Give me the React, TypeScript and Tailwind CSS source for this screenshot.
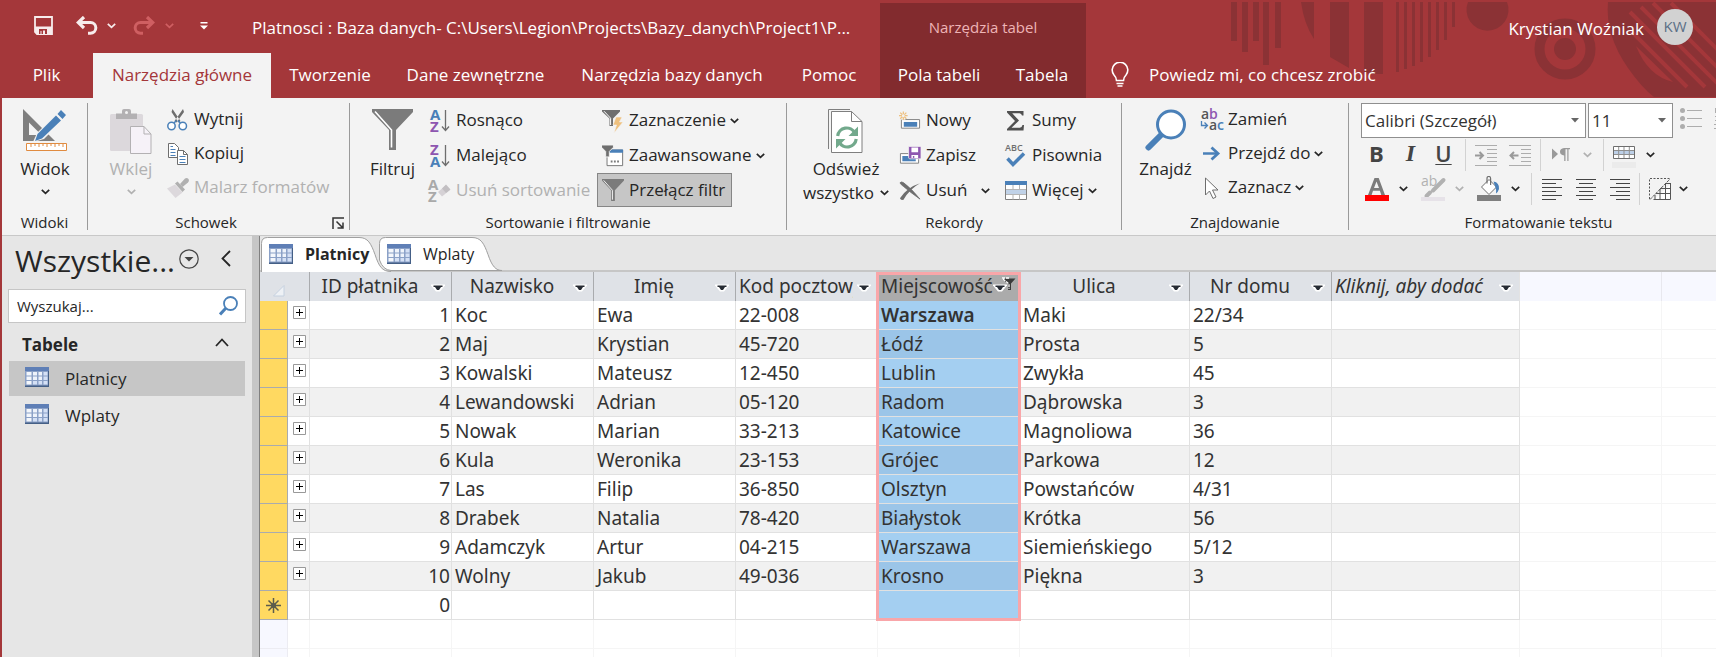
import React from "react";
import clsx from "clsx";

const uiFont = "font-['Open_Sans','Liberation_Sans',sans-serif]";
const gridFont = "font-['Noto_Sans','Liberation_Sans',sans-serif]";

/* ---------- small shared drawings ---------- */

function Chevron({ className = "text-[#262626]" }: { className?: string }) {
  return (
    <svg width="9" height="6" viewBox="0 0 9 6" className={clsx("shrink-0", className)} aria-hidden="true">
      <path d="M.8.8 4.5 4.4 8.2.8" fill="none" stroke="currentColor" strokeWidth="1.7" />
    </svg>
  );
}

function FunnelShape({ size }: { size: number }) {
  return (
    <svg width={size} height={size} viewBox="0 0 41 41" className="shrink-0" aria-hidden="true">
      <path d="M0 0h41v3L24 21v20h-7V21L0 3z" fill="#7b7b7b" />
      <path d="M3 2.5 19.5 21v17.500" fill="none" stroke="#fff" strokeWidth="1.6" />
    </svg>
  );
}

const SaveIcon = () => (
  <svg width="19" height="19" viewBox="0 0 19 19" aria-hidden="true">
    <path d="M1 1h17v17H3l-2-2z" fill="none" stroke="#f7ecec" strokeWidth="1.800" />
    <path d="M1 10.500h17V18H3l-2-2z" fill="#f7ecec" />
    <path d="M5 13h8v5h-2v-3.500H9V18H7.500v-3H6.500v3H5z" fill="#a4373a" />
  </svg>
);

const UndoIcon = ({ className }: { className?: string }) => (
  <svg width="22" height="20" viewBox="0 0 22 20" className={className} aria-hidden="true">
    <path d="M2 6.500h12.500a5.300 5.300 0 0 1 0 10.700H12" fill="none" stroke="currentColor" strokeWidth="3" />
    <path d="M8 1 2.200 6.500 8 12" fill="none" stroke="currentColor" strokeWidth="3.200" />
  </svg>
);

const ViewIcon = () => (
  <svg width="44" height="44" viewBox="0 0 44 44" aria-hidden="true">
    <path fillRule="evenodd" fill="#7f7f7f" d="M0 0 32 32H0zM6 13.500V26h12.500z" />
    <path d="m10 33 4-9L34.500 3.500l7 6L21 30z" fill="#f3f3f3" />
    <path d="m12 32 2.500-7L33 6.500l5 5L19 29.500zM34.500 5 38 1l5 5-3.500 4z" fill="#4a80b8" />
    <path d="M3.500 34.500h40v7h-40z" fill="#fff" stroke="#e08b40" />
    <path d="M8 35v3m4-3v2m4-2v3m4-3v2m4-2v3m4-3v2m4-2v3m4-3v2m4-2v3" stroke="#e08b40" />
  </svg>
);

const PasteIcon = () => (
  <svg width="42" height="46" viewBox="0 0 42 46" aria-hidden="true">
    <rect y="5" width="33" height="37" rx="1.500" fill="#dcd8dc" />
    <path d="M6 4.500h6V2q0-2 2-2h5q2 0 2 2v2.500h6V10H6z" fill="#b3b1b3" />
    <circle cx="16.500" cy="3.500" r="1.500" fill="#f3f3f3" />
    <path d="M20.500 17.500H34l7 7.500v19.500H20.500z" fill="#f6f2f8" stroke="#b3b1b3" />
    <path d="M34 17.500V25h7" fill="none" stroke="#b3b1b3" />
  </svg>
);

const CutIcon = () => (
  <svg width="22" height="22" viewBox="0 0 22 22" aria-hidden="true">
    <path d="M5.500 0 13.500 12l-2 1.500L4.500 3zM16 0 7.500 12l2 1.500L17 3z" fill="#6e6e6e" />
    <circle cx="4.500" cy="17" r="3.700" fill="#fff" stroke="#4a80b8" strokeWidth="1.500" />
    <circle cx="15.800" cy="17" r="3.700" fill="#fff" stroke="#4a80b8" strokeWidth="1.500" />
    <path d="m7 14 2.500-2.500M13.300 14 11 11.500" stroke="#4a80b8" strokeWidth="1.500" />
  </svg>
);

const CopyIcon = () => (
  <svg width="22" height="23" viewBox="0 0 22 23" aria-hidden="true">
    <path d="M1.500.5h6l4 4v10h-10z" fill="#fff" stroke="#6e6e6e" />
    <path d="M3.500 6.500h5m-5 3h5m-5 3h5m-5-9H6" stroke="#4a80b8" />
    <path d="M10.500 7.500h6l4 4v10h-10z" fill="#fff" stroke="#6e6e6e" />
    <path d="M16.500 7.500v4h4" fill="none" stroke="#6e6e6e" />
    <path d="M12.500 13.500h6m-6 3h6m-6 3h6" stroke="#4a80b8" />
  </svg>
);

const BrushIcon = () => (
  <svg width="22" height="21" viewBox="0 0 22 21" aria-hidden="true">
    <path d="m0 10.500 8-4 7.500 8L8.500 20z" fill="#dcd8dc" />
    <path d="m8 5.500 2.500-2 7.500 8-2.500 2.500z" fill="#b0b0b0" />
    <path d="m13 6 5-5.500q2-1 3.500.5 1 2-.5 3.500L15.500 9z" fill="#b0b0b0" />
  </svg>
);

const LauncherIcon = () => (
  <svg width="12" height="12" viewBox="0 0 12 12" aria-hidden="true">
    <path d="M1 12V1h11M4.500 4.500l6 6M11 5.500V11H5.500" fill="none" stroke="#333" strokeWidth="1.500" />
  </svg>
);

function SortIcon({ top, bottom, faded }: { top: "A" | "Z"; bottom: "A" | "Z"; faded?: boolean }) {
  const tone = (c: "A" | "Z") => (faded ? "#a9a9a9" : c === "A" ? "#4a80b8" : "#8e56b0");
  return (
    <svg width="24" height="24" viewBox="0 0 24 24" aria-hidden="true" className="shrink-0 overflow-visible font-['Open_Sans',sans-serif] text-[15px] font-bold">
      <text x={faded ? 0 : 2} y="11" fill={tone(top)}>{top}</text>
      <text x={faded ? 0 : 2} y="23" fill={tone(bottom)}>{bottom}</text>
      {faded ? (
        <g>
          <path d="M17.500 6.500 22 11l-8 6.500-4-4.500z" fill="#d5d1d5" />
          <path d="m14 9.500 4 4.500 4.500-3.500-4.500-5z" fill="#c2bfc2" />
        </g>
      ) : (
        <path d="M17.500 1v20M14 17.500l3.500 4 3.500-4" fill="none" stroke="#6e6e6e" strokeWidth="1.300" />
      )}
    </svg>
  );
}

const FilterBoltIcon = () => (
  <svg width="22" height="24" viewBox="0 0 22 24" aria-hidden="true">
    <path d="M0 1h18v1.500L11 9.500V17H7.500V9.500L0 2.500z" fill="#6e6e6e" />
    <path d="M2 2.200 8.600 9.200V16" fill="none" stroke="#fff" />
    <path d="m14 8h6l-2.500 5H21l-9 11 2.500-8H11z" fill="#eec07e" stroke="#f3f3f3" strokeWidth=".6" />
  </svg>
);

const FilterAdvancedIcon = () => (
  <svg width="24" height="24" viewBox="0 0 24 24" aria-hidden="true">
    <path d="M5.500 5.500h17v17h-17z" fill="#fff" stroke="#6e6e6e" />
    <path d="M9 5h14v3.500H7z" fill="#4a80b8" />
    <path d="M-.5 0h13v2.500L8 7v6H4V7L-.5 2.500z" fill="#6e6e6e" stroke="#f3f3f3" />
    <path d="M9.500 17h2v2h-2zm3.500 0h2v2h-2zm3.500 0h2v2h-2z" fill="#7b7b7b" />
  </svg>
);

const RefreshIcon = () => (
  <svg width="36" height="44" viewBox="0 0 36 44" aria-hidden="true">
    <path d="M.5 40V.5H22" fill="none" stroke="#7f7f7f" />
    <path d="M3.500 2.500h20l10.500 10v31h-30.500z" fill="#fff" stroke="#7f7f7f" />
    <path d="M23.500 2.500v10H34" fill="none" stroke="#7f7f7f" />
    <path d="M9.700 27a9 9 0 0 1 17-3M28.200 30a9 9 0 0 1-17 3" fill="none" stroke="#72a98c" strokeWidth="3.200" />
    <path d="M30 17.500V27h-9.500zM8 39.500V30h9.500z" fill="#72a98c" />
  </svg>
);

const NewRecordIcon = () => (
  <svg width="23" height="20" viewBox="0 0 23 20" aria-hidden="true">
    <path d="M2.500 8.500h19v9h-19z" fill="#fff" stroke="#7f7f7f" />
    <path d="M5 11h14v5H5z" fill="#4a80b8" />
    <circle cx="4.500" cy="4.500" r="4.500" fill="#f3f3f3" />
    <path d="M4.500 0v9M0 4.500h9M1.300 1.300l6.400 6.400m0-6.400L1.300 7.700" stroke="#eec07e" strokeWidth="1.300" />
    <circle cx="4.500" cy="4.500" r="1.500" fill="#f3f3f3" />
  </svg>
);

const SaveRecordIcon = () => (
  <svg width="23" height="20" viewBox="0 0 23 20" aria-hidden="true">
    <path d="M1.500 7.500h19v10h-19z" fill="#fff" stroke="#7f7f7f" />
    <path d="M3.500 10h14v5.500h-14z" fill="#4a80b8" />
    <path d="M10 0h13v13H11l-1-1z" fill="#8e56b0" stroke="#f3f3f3" strokeWidth=".8" />
    <path d="M13 1h7v5h-7zm0 8h7v3h-7z" fill="#fff" />
    <path d="M14.500 10h1.500v2h-1.500z" fill="#8e56b0" />
  </svg>
);

const DeleteIcon = () => (
  <svg width="23" height="20" viewBox="0 0 23 20" aria-hidden="true">
    <path d="M1 1.500Q2.500-.5 5 1.500q8 6 17 17-10-7-17-13Q2 3.500 1 1.500z" fill="#6e6e6e" stroke="#6e6e6e" strokeWidth=".8" />
    <path d="M22 2Q11 8 4.500 19.500q-3 0-3.500-2Q9 6 22 2z" fill="#6e6e6e" />
  </svg>
);

const SigmaIcon = () => (
  <svg width="22" height="20" viewBox="0 0 22 20" aria-hidden="true">
    <path d="M2 0h16.500v4.500h-1.500Q16.500 2.500 14.500 2.200H7.200L14 9.500l-7.500 7.300h8.300q2.200-.3 2.700-2.800H19l-.5 5.500H2v-1.500L10 10 2 1.500z" fill="#505050" />
  </svg>
);

const SpellIcon = () => (
  <svg width="22" height="24" viewBox="0 0 22 24" aria-hidden="true" className="overflow-visible font-['Open_Sans',sans-serif] text-[9px] font-semibold">
    <text x="0" y="7" fill="#6e6e6e">ABC</text>
    <path d="m2.500 14.500 5.500 6 11-11" fill="none" stroke="#4a80b8" strokeWidth="3.500" />
  </svg>
);

const MoreIcon = () => (
  <svg width="22" height="20" viewBox="0 0 22 20" aria-hidden="true">
    <path d="M.5.500h21v18H.5z" fill="#fff" stroke="#7f7f7f" />
    <path d="M0 0h22v4H0z" fill="#4a80b8" />
    <path d="M1 8.500h20v5H1z" fill="#c0d2e8" />
    <path d="M1 8.500h20M1 13.500h20M8 4v4.500M14.500 4v4.500M8 13.500v5M14.500 13.500v5" stroke="#b5b5b5" />
  </svg>
);

const FindIcon = () => (
  <svg width="42" height="42" viewBox="0 0 42 42" aria-hidden="true">
    <path d="M3.500 38.500 17 25" stroke="#4a80b8" strokeWidth="6" strokeLinecap="round" />
    <circle cx="26" cy="15.500" r="13.500" fill="#fff" stroke="#4a80b8" strokeWidth="3" />
  </svg>
);

const ReplaceIcon = () => (
  <svg width="24" height="24" viewBox="0 0 24 24" aria-hidden="true" className="shrink-0 overflow-visible font-['Open_Sans',sans-serif] text-[14px] font-semibold">
    <text x="1" y="11" fill="#555">a</text>
    <text x="9" y="11" fill="#8e56b0">b</text>
    <text x="9" y="22" fill="#555">a</text>
    <text x="17" y="22" fill="#4a80b8">c</text>
    <path d="M1.500 13v4.500H7M4.500 14.500l3 3-3 3" fill="none" stroke="#4a80b8" strokeWidth="1.300" />
  </svg>
);

const GotoIcon = () => (
  <svg width="18" height="16" viewBox="0 0 18 16" aria-hidden="true">
    <path d="M0 7.500h14" stroke="#4a80b8" strokeWidth="2.500" />
    <path d="M8.500 1.500 15 7.500l-6.500 6" fill="none" stroke="#4a80b8" strokeWidth="2.800" />
  </svg>
);

const PointerIcon = () => (
  <svg width="16" height="23" viewBox="0 0 16 23" aria-hidden="true">
    <path d="M1.500 1v17l4-4 3.500 7.500 3-1.500-3.500-7h5.500z" fill="#fff" stroke="#6e6e6e" />
  </svg>
);

const SheetIcon = () => (
  <svg width="24" height="20" viewBox="0 0 24 20" className="shrink-0" aria-hidden="true">
    <path d="M0 0h24v20H0z" fill="#8ba1c7" />
    <path d="M0 0h24v4H0z" fill="#5f7fb6" />
    <path d="M1.500 5h5v3.500h-5zm0 4.500h5V13h-5zm0 4.500h5v3.500h-5z" fill="#f4f7fc" />
    <path d="M8 5h4v3.500H8zm5.500 0h3.500v3.500h-3.500zM8 9.500h4V13H8zm5.500 0h3.500V13h-3.500z" fill="#eef3fb" />
    <path d="M18.500 5h4v3.500h-4zm0 4.500h4V13h-4zM8 14h4v3.500H8zm5.500 0h3.500v3.500h-3.500zm5 0h4v3.500h-4z" fill="#d4e0f5" />
    <path d="M0 18.500h24V20H0zM23 4h1v16h-1z" fill="#445f86" />
  </svg>
);

/* ---------- title bar ---------- */

const Backdrop = () => (
  <svg width="488" height="98" viewBox="0 0 488 98" className="absolute right-0 top-0" aria-hidden="true">
    <g fill="#8b3235">
      <path d="M3 2h6v39H3zM14 2h6v50h-6zM25 2h6v39h-6zM35 2h6v63h-6zM47 2h6v46h-6z" />
      <path d="M73 2h13v37Q76 24 73 2zM102 2h19v66l-19-11zM136 2h19v72q-10 0-19-1z" />
      <path d="M168 2h3v70h-3zM176 2h3v67h-3zM184 2h3v64h-3zM192 2h3v60h-3zM200 2h3v55h-3zM208 2h3v48h-3zM216 2h3v38h-3zM224 2h3v25h-3z" />
      <path d="M240 2h39a21 21 0 1 1-39 0z" />
      <circle cx="337" cy="49" r="11" />
      <path d="M380 2Q377 35 400 68q14 20 26 29h62V2z" />
    </g>
    <circle cx="337" cy="49" r="25.500" fill="none" stroke="#8b3235" strokeWidth="10" />
    <g fill="none" stroke="#a4373a" strokeWidth="4">
      <path d="m402 12 75 75M413 7l78 78M425 3l70 70M403 31l56 56M443 3l56 56" />
    </g>
    <path d="M408 46q12 30 37 36z" fill="#a4373a" />
  </svg>
);

function TitleBar() {
  return (
    <div className="flex h-[53px] text-white">
      <div className="flex w-[878px] shrink-0 items-center pb-0.5">
        <button aria-label="Zapisz" className="ml-8"><SaveIcon /></button>
        <button aria-label="Cofnij" className="ml-[23px] text-[#f7ecec]"><UndoIcon /></button>
        <button aria-label="Lista cofania" className="ml-[9px]"><Chevron className="text-[#f7ecec]" /></button>
        <button aria-label="Ponów" className="ml-[17px] text-[#cf5f62]"><UndoIcon className="-scale-x-100" /></button>
        <button aria-label="Lista ponawiania" className="ml-[10px]"><Chevron className="text-[#cf5f62]" /></button>
        <button aria-label="Dostosuj pasek" className="ml-[26px]">
          <svg width="8" height="8" viewBox="0 0 8 8" aria-hidden="true"><path d="M.5 0h7v1.500h-7zM0 3.500h8L4 7.500z" fill="#fff" /></svg>
        </button>
        <h1 className="ml-11 pt-1 text-[17px] leading-6 whitespace-nowrap">
          Platnosci : Baza danych- C:\Users\Legion\Projects\Bazy_danych\Project1\P...
        </h1>
      </div>
      <div className="mt-[3px] flex w-[206px] shrink-0 items-center justify-center bg-[#822b2e] pb-0.5 text-[15px] text-[#eeb4b6]">
        Narzędzia tabel
      </div>
      <div className="flex flex-1 items-center justify-end gap-[13px] pr-[23px]">
        <span className="pt-1 text-[17px] leading-6">Krystian Woźniak</span>
        <span className="grid size-9 place-items-center rounded-full bg-[#d2d2d2] text-[15px] text-[#5b6f86]">KW</span>
      </div>
    </div>
  );
}

const tabs = [
  { name: "Plik", size: "w-[91px] pr-0.5" },
  { name: "Narzędzia główne", size: "w-[178px]", active: true },
  { name: "Tworzenie", size: "w-[118px]" },
  { name: "Dane zewnętrzne", size: "w-[173px]" },
  { name: "Narzędzia bazy danych", size: "w-[220px]" },
  { name: "Pomoc", size: "w-[98px] pr-1" },
  { name: "Pola tabeli", size: "w-[118px]", context: true },
  { name: "Tabela", size: "w-[88px]", context: true },
];

function TabStrip() {
  return (
    <nav className="flex h-[45px] text-[17px] text-white">
      {tabs.map((t) => (
        <button
          key={t.name}
          className={clsx(
            "shrink-0 pb-0.5 whitespace-nowrap",
            t.size,
            t.active && "bg-[#f3f3f3] text-[#a4373a]",
            t.context && "bg-[#822b2e]",
          )}
        >
          {t.name}
        </button>
      ))}
      <button className="ml-[25px] flex items-center gap-5 pb-0.5 whitespace-nowrap">
        <svg width="18" height="25" viewBox="0 0 18 25" aria-hidden="true">
          <path d="M5.500 18.500q0-3-2.500-5.500A7.800 7.800 0 1 1 15 13q-2.500 2.500-2.500 5.500zM5.500 21.500h7M6.500 24h5" fill="none" stroke="#fff" strokeWidth="1.600" />
        </svg>
        Powiedz mi, co chcesz zrobić
      </button>
    </nav>
  );
}

/* ---------- ribbon ---------- */

function Group({ title, size, children, launcher }: { title: string; size: string; children: React.ReactNode; launcher?: boolean }) {
  return (
    <section className={clsx("flex flex-col", size)}>
      <div className="flex h-[113px] pt-[5px]">{children}</div>
      <div className="flex h-6 items-center pb-0.5 text-[15px]">
        <span className="flex-1 text-center">{title}</span>
        {launcher && (
          <button aria-label="Okno schowka" className="ml-2 mr-[5px] flex pt-0.5"><LauncherIcon /></button>
        )}
      </div>
    </section>
  );
}

const Divider = () => <div className="my-[5px] w-px shrink-0 bg-[#9a9a9a]" />;

function BigButton({ icon, lines, size, muted, menu }: { icon: React.ReactNode; lines: string[]; size: string; muted?: boolean; menu?: boolean }) {
  const last = lines.length - 1;
  return (
    <button className={clsx("flex shrink-0 flex-col items-center pt-[6px] leading-6", size, muted && "text-[#b1b1b1]")}>
      <span className="mb-[3px] flex h-[45px]">{icon}</span>
      {lines.map((l, i) => (
        <span key={l} className="flex items-center gap-[6px] whitespace-nowrap">
          {l}
          {i === last && last > 0 && menu && <Chevron />}
        </span>
      ))}
      {last === 0 && menu && <span className="mt-2 flex"><Chevron className={muted ? "text-[#b1b1b1]" : "text-[#262626]"} /></span>}
    </button>
  );
}

function Cmd({ icon, label, menu, muted, tall, wide }: { icon: React.ReactNode; label: string; menu?: boolean; muted?: boolean; tall?: boolean; wide?: boolean }) {
  return (
    <button className={clsx("flex items-center whitespace-nowrap", tall ? "h-[35px]" : "h-[34px]", muted && "text-[#b1b1b1]")}>
      <span className="mr-[5px] flex w-[22px] shrink-0 justify-center">{icon}</span>
      <span className="pb-0.5">{label}</span>
      {menu && <span className={clsx("flex", wide ? "ml-[14px]" : "ml-1")}><Chevron /></span>}
    </button>
  );
}

const Tick = () => <span className="h-8 w-px shrink-0 bg-[#d2d2d2]" />;

function DropTriangle() {
  return (
    <svg width="8" height="5" viewBox="0 0 8 5" aria-hidden="true" className="pointer-events-none absolute right-[7px] top-[15px]">
      <path d="M0 0h8L4 4.500z" fill="#666" />
    </svg>
  );
}

function Indent({ out }: { out?: boolean }) {
  return (
    <svg width="22" height="21" viewBox="0 0 22 21" aria-hidden="true">
      <path d="M0 .5h22M12 4.500h10M12 8.500h10M12 12.500h10M12 16.500h10M0 20.500h22" stroke="#adadad" />
      <path d={out ? "M9.500 10.500H2M5 7l-3.500 3.500L5 14" : "M0 10.500h7.500M4.500 7l3.500 3.500L4.500 14"} fill="none" stroke="#9a9a9a" strokeWidth="2" />
    </svg>
  );
}

function AlignIcon({ kind }: { kind: "left" | "center" | "right" }) {
  const short = kind === "left" ? 0 : kind === "center" ? 3 : 6;
  return (
    <svg width="20" height="21" viewBox="0 0 20 21" aria-hidden="true">
      {[0, 1, 2, 3, 4, 5].map((i) => (
        <rect key={i} x={i % 2 ? short : 0} y={i * 4} width={i % 2 ? 14 : 20} height="1" fill="#444" />
      ))}
    </svg>
  );
}

function FormatGroup() {
  return (
    <section className="flex min-w-0 flex-1 flex-col overflow-hidden pl-3">
      <div className="flex h-[113px] flex-col pt-[5px]">
        <div className="flex h-[35px] shrink-0">
          <label className="relative block w-[225px] shrink-0">
            <select aria-label="Czcionka" className="h-[35px] w-full appearance-none border border-[#8f8f8f] bg-white pl-[3px] text-[17px] text-[#333]">
              <option>Calibri (Szczegół)</option>
            </select>
            <DropTriangle />
          </label>
          <label className="relative ml-[2px] block w-[85px] shrink-0">
            <select aria-label="Rozmiar czcionki" className="h-[35px] w-full appearance-none border border-[#8f8f8f] bg-white pl-[3px] text-[17px] text-[#333]">
              <option>11</option>
            </select>
            <DropTriangle />
          </label>
          <div className="flex shrink-0 items-start gap-3 pl-[7px] pt-[5px]">
            <button aria-label="Punktory">
              <svg width="22" height="21" viewBox="0 0 22 21" aria-hidden="true">
                <path d="M7 2.500h15M7 10.500h15M7 18.500h15" stroke="#adadad" />
                <circle cx="2.500" cy="2.500" r="2.500" fill="#adadad" /><circle cx="2.500" cy="10.500" r="2.500" fill="#adadad" /><circle cx="2.500" cy="18.500" r="2.500" fill="#adadad" />
              </svg>
            </button>
            <button aria-label="Numerowanie">
              <svg width="3" height="21" viewBox="0 0 3 21" aria-hidden="true"><path d="M1 0h1v5H1zM1 8h2v1H1zM1 12h2v1H1zM0 16h3v1H0zM0 20h3v1H0z" fill="#adadad" /></svg>
            </button>
          </div>
        </div>
        <div className="flex h-[34px] shrink-0 items-center text-[22px] leading-none text-[#444]">
          <button className="w-[31px] pb-1 font-bold">B</button>
          <button className="w-[37px] pb-1 font-['Liberation_Serif',serif] text-[24px] font-bold italic">I</button>
          <button className="mr-[7px] w-[29px] pb-1 font-semibold underline decoration-1 underline-offset-2">U</button>
          <Tick />
          <button aria-label="Zwiększ wcięcie" className="ml-[9px]"><Indent /></button>
          <button aria-label="Zmniejsz wcięcie" className="ml-3 mr-[9px]"><Indent out /></button>
          <Tick />
          <button aria-label="Kierunek tekstu" className="ml-[11px]">
            <svg width="18" height="14" viewBox="0 0 18 14" aria-hidden="true">
              <path d="M0 .5 6 6 0 11.500zM12 0h6v1.300h-1.500V13h-1.200V1.300h-1.800V13h-1.300V7.500Q8 7 8 3.800T12 0z" fill="#9a9a9a" />
            </svg>
          </button>
          <button aria-label="Lista kierunków" className="ml-[13px] mr-[11px] flex"><Chevron className="text-[#b1b1b1]" /></button>
          <Tick />
          <button aria-label="Linie siatki" className="ml-[8px] pt-1">
            <svg width="24" height="24" viewBox="0 0 24 24" aria-hidden="true">
              <path d="M1.500 1.500h21v12h-21z" fill="#fff" stroke="#6e6e6e" />
              <path d="M2 5.500h20v4H2z" fill="#bdd0e8" />
              <path d="M2 5.500h20M2 9.500h20M6.700 2v11M12 2v11M17.300 2v11" stroke="#8f8f8f" />
              <path d="M0 17h24v6H0z" fill="#ebebeb" />
            </svg>
          </button>
          <button aria-label="Lista linii siatki" className="ml-[10px] flex"><Chevron /></button>
        </div>
        <div className="flex h-[34px] shrink-0 items-center">
          <button aria-label="Kolor czcionki" className="ml-1">
            <svg width="24" height="26" viewBox="0 0 24 26" aria-hidden="true">
              <path fillRule="evenodd" d="M9.500 2h4.200L20 19h-3.700l-1.400-4.300H8L6.600 19H3zM11.500 5.500 9 12h5z" fill="#7b7b7b" />
              <path d="M0 19h24v6H0z" fill="#f00" />
            </svg>
          </button>
          <button aria-label="Lista kolorów czcionki" className="ml-[10px] flex"><Chevron /></button>
          <button aria-label="Wyróżnienie" className="ml-[13px]">
            <svg width="24" height="26" viewBox="0 0 24 26" aria-hidden="true" className="overflow-visible font-['Open_Sans',sans-serif] text-[14px]">
              <text x="0" y="10" fill="#b1b1b1">ab</text>
              <path d="M22.500 4 12 14.500M9 16.500 5.500 20" stroke="#b1b1b1" strokeWidth="4" strokeLinecap="round" />
              <path d="M0 21h24v4H0z" fill="#e6e2e8" />
            </svg>
          </button>
          <button aria-label="Lista wyróżnień" className="ml-[10px] flex"><Chevron className="text-[#b1b1b1]" /></button>
          <button aria-label="Kolor tła" className="ml-[13px]">
            <svg width="24" height="26" viewBox="0 0 24 26" aria-hidden="true">
              <path d="m12 3.500 7.500 7.500-7.500 7.500L4.500 11z" fill="#fff" stroke="#6e6e6e" />
              <path d="M10 7.500V2.500q0-2 1.800-2t1.800 2V9" fill="none" stroke="#6e6e6e" strokeWidth="1.200" />
              <path d="M16.500 5.500q6 1 5.500 7.500-1 3-3 4.500.5-4-.5-6z" fill="#4a80b8" />
              <path d="M0 19h24v6H0z" fill="#7f7f7f" />
            </svg>
          </button>
          <button aria-label="Lista kolorów tła" className="ml-[10px] mr-[11px] flex"><Chevron /></button>
          <Tick />
          <button aria-label="Do lewej" className="ml-[10px]"><AlignIcon kind="left" /></button>
          <button aria-label="Do środka" className="ml-[14px]"><AlignIcon kind="center" /></button>
          <button aria-label="Do prawej" className="ml-[14px] mr-[9px]"><AlignIcon kind="right" /></button>
          <Tick />
          <button aria-label="Kolor naprzemienny" className="ml-[9px]">
            <svg width="22" height="22" viewBox="0 0 22 22" aria-hidden="true">
              <path d="M.5 21V.5H21" fill="none" stroke="#555" strokeDasharray="2 1.500" />
              <path d="M21.500 6v15.500H5z" fill="#fff" />
              <path d="M21.500 5v16.500H4.500M16.500 6v15M11 11v10M16 5.500h5.500M11 10.500h10.500M7 15.500h14.500M6 17v4.500" fill="none" stroke="#555" />
              <path d="M1 21.500 21 1" stroke="#555" strokeDasharray="3 1" />
            </svg>
          </button>
          <button aria-label="Lista kolorów naprzemiennych" className="ml-[8px] flex"><Chevron /></button>
        </div>
      </div>
      <div className="flex h-6 shrink-0 items-center justify-center pb-0.5 text-[15px]">Formatowanie tekstu</div>
    </section>
  );
}

function Ribbon() {
  return (
    <div className="flex h-[138px] shrink-0 overflow-hidden border-b border-[#c8c8c8] bg-[#f3f3f3] text-[17px] text-[#262626]">
      <Group title="Widoki" size="w-[85px] shrink-0">
        <BigButton icon={<ViewIcon />} lines={["Widok"]} size="w-[86px]" menu />
      </Group>
      <Divider />
      <Group title="Schowek" size="w-[261px] shrink-0" launcher>
        <BigButton icon={<PasteIcon />} lines={["Wklej"]} size="w-[79px] pl-[7px]" muted menu />
        <div className="flex flex-col items-start">
          <Cmd icon={<CutIcon />} label="Wytnij" />
          <Cmd icon={<CopyIcon />} label="Kopiuj" />
          <Cmd icon={<BrushIcon />} label="Malarz formatów" muted />
        </div>
      </Group>
      <Divider />
      <Group title="Sortowanie i filtrowanie" size="w-[436px] shrink-0">
        <BigButton icon={<FunnelShape size={41} />} lines={["Filtruj"]} size="w-[79px] pl-1.5" />
        <div className="flex w-[162px] flex-col items-start">
          <Cmd tall icon={<SortIcon top="A" bottom="Z" />} label="Rosnąco" />
          <Cmd tall icon={<SortIcon top="Z" bottom="A" />} label="Malejąco" />
          <Cmd tall icon={<SortIcon top="A" bottom="Z" faded />} label="Usuń sortowanie" muted />
        </div>
        <div className="flex flex-col items-start pl-[6px]">
          <div className="pl-[5px]"><Cmd tall icon={<FilterBoltIcon />} label="Zaznaczenie" menu /></div>
          <div className="pl-[5px]"><Cmd tall icon={<FilterAdvancedIcon />} label="Zaawansowane" menu /></div>
          <button aria-pressed="true" className="flex h-[34px] items-center gap-[5px] border border-[#868686] bg-[#c6c6c6] pl-1 pr-1.5 whitespace-nowrap">
            <FunnelShape size={22} />
            Przełącz filtr
          </button>
        </div>
      </Group>
      <Divider />
      <Group title="Rekordy" size="w-[334px] shrink-0">
        <BigButton icon={<RefreshIcon />} lines={["Odśwież", "wszystko"]} size="w-[112px] pl-1.5" menu />
        <div className="flex w-[106px] flex-col items-start">
          <Cmd tall icon={<NewRecordIcon />} label="Nowy" />
          <Cmd tall icon={<SaveRecordIcon />} label="Zapisz" />
          <Cmd tall icon={<DeleteIcon />} label="Usuń" menu wide />
        </div>
        <div className="flex flex-col items-start">
          <Cmd tall icon={<SigmaIcon />} label="Sumy" />
          <Cmd tall icon={<SpellIcon />} label="Pisownia" />
          <Cmd tall icon={<MoreIcon />} label="Więcej" menu />
        </div>
      </Group>
      <Divider />
      <Group title="Znajdowanie" size="w-[226px] shrink-0">
        <BigButton icon={<FindIcon />} lines={["Znajdź"]} size="w-[79px] pl-2" />
        <div className="flex flex-col items-start">
          <Cmd icon={<ReplaceIcon />} label="Zamień" />
          <Cmd icon={<GotoIcon />} label="Przejdź do" menu />
          <Cmd icon={<PointerIcon />} label="Zaznacz" menu />
        </div>
      </Group>
      <Divider />
      <FormatGroup />
    </div>
  );
}

/* ---------- navigation pane ---------- */

function NavPane() {
  return (
    <aside className="w-[250px] shrink-0 text-[#262626]">
      <div className="flex h-[53px] items-center pb-1 pl-[13px]">
        <h2 className="w-[163px] text-[30px] leading-[40px] whitespace-nowrap">Wszystkie...</h2>
        <button aria-label="Kategoria" className="ml-px flex pb-1">
          <svg width="20" height="20" viewBox="0 0 20 20" aria-hidden="true">
            <circle cx="10" cy="10" r="9.200" fill="none" stroke="#444" strokeWidth="1.200" />
            <path d="M5.500 8h9L10 12.500z" fill="#444" />
          </svg>
        </button>
        <button aria-label="Zwiń okienko" className="ml-[22px] flex pb-1">
          <svg width="10" height="17" viewBox="0 0 10 17" aria-hidden="true"><path d="M9 1 1.500 8.500 9 16" fill="none" stroke="#262626" strokeWidth="1.800" /></svg>
        </button>
      </div>
      <label className="ml-[6px] flex h-[34px] w-[238px] items-center border border-[#c6c6c6] bg-white pr-[7px]">
        <input type="text" placeholder="Wyszukaj..." aria-label="Wyszukaj" className="min-w-0 flex-1 pl-2 text-[15px] outline-none placeholder:text-[#262626]" />
        <svg width="19" height="20" viewBox="0 0 19 20" aria-hidden="true">
          <path d="M1 18.500 7 12" stroke="#4a80b8" strokeWidth="3" />
          <circle cx="11.500" cy="7.500" r="6.500" fill="#fff" stroke="#4a80b8" strokeWidth="1.800" />
        </svg>
      </label>
      <button className="flex h-[38px] w-full items-center justify-between pl-5 pr-[23px] pt-1.5 text-[17px] font-bold">
        Tabele
        <svg width="14" height="9" viewBox="0 0 14 9" aria-hidden="true" className="mb-1.5"><path d="M1 8 7 1.500 13 8" fill="none" stroke="#262626" strokeWidth="1.800" /></svg>
      </button>
      <ul className="text-[17px]">
        {["Platnicy", "Wplaty"].map((n, i) => (
          <li key={n} className="px-[7px] pb-0.5">
            <a href={`#${n}`} className={clsx("flex h-[35px] items-center gap-4 pl-4", i === 0 && "bg-[#c6c6c6]")}>
              <span className="pb-1"><SheetIcon /></span>
              <span className="pt-px">{n}</span>
            </a>
          </li>
        ))}
      </ul>
    </aside>
  );
}

/* ---------- datasheet ---------- */

const columns = ["ID płatnika", "Nazwisko", "Imię", "Kod pocztowy", "Miejscowość", "Ulica", "Nr domu"];

const records = [
  ["1", "Koc", "Ewa", "22-008", "Warszawa", "Maki", "22/34"],
  ["2", "Maj", "Krystian", "45-720", "Łódź", "Prosta", "5"],
  ["3", "Kowalski", "Mateusz", "12-450", "Lublin", "Zwykła", "45"],
  ["4", "Lewandowski", "Adrian", "05-120", "Radom", "Dąbrowska", "3"],
  ["5", "Nowak", "Marian", "33-213", "Katowice", "Magnoliowa", "36"],
  ["6", "Kula", "Weronika", "23-153", "Grójec", "Parkowa", "12"],
  ["7", "Las", "Filip", "36-850", "Olsztyn", "Powstańców", "4/31"],
  ["8", "Drabek", "Natalia", "78-420", "Białystok", "Krótka", "56"],
  ["9", "Adamczyk", "Artur", "04-215", "Warszawa", "Siemieńskiego", "5/12"],
  ["10", "Wolny", "Jakub", "49-036", "Krosno", "Piękna", "3"],
  ["0", "", "", "", "", "", ""],
];

const SELECTED = 4;

const HeadArrow = () => (
  <svg width="14" height="8" viewBox="0 0 14 8" className="shrink-0" aria-hidden="true">
    <path d="M0 .5h14v1L9 7.500H5L0 1.500z" fill="#fff" />
    <path d="M2.500 1.500h9V3H10L8 6H6L4 3H2.500z" fill="#262b33" />
  </svg>
);

function HeadCell({ label, selected, italic }: { label: string; selected?: boolean; italic?: boolean }) {
  const long = label.length > 10 && !label.startsWith("ID");
  return (
    <th
      scope="col"
      className={clsx(
        "h-[29px] border-r p-0 font-normal",
        selected ? "border-[#c6c6c6] bg-[#ababab]" : "bg-[#dfe2e7]",
        !selected && (italic ? "border-[#e3e3e3] italic" : "border-[#a9abae]"),
      )}
    >
      <div className={clsx("flex h-[29px] items-center pb-0.5 pl-[3px]", selected ? "pr-3" : "pr-[6px]")}>
        <span className={clsx("min-w-0 flex-1 overflow-hidden whitespace-nowrap", long ? "text-left" : "text-center")}>{label}</span>
        <button aria-label={`Filtruj: ${label}`} className={clsx("relative flex pt-1", !selected && "ml-1")}>
          <HeadArrow />
          {selected && (
            <svg width="16" height="14" viewBox="0 0 16 14" className="absolute -right-[9px] -top-[3px]" aria-hidden="true">
              <path d="M2 1.500h13.500L11 6.500V13H8V7z" fill="#3a3a3a" />
              <path d="M2 1h8M3 2l6 5v5" fill="none" stroke="#fff" strokeWidth="1.300" strokeDasharray="3 1" />
            </svg>
          )}
        </button>
      </div>
    </th>
  );
}

function Datasheet() {
  return (
    <div className="relative min-h-0 flex-1 overflow-hidden bg-white">
      <table className={clsx("w-full table-fixed border-separate border-spacing-0 text-[19px] leading-7 text-[#333]", gridFont)}>
        <colgroup>
          <col className="w-7" />
          <col className="w-[22px]" />
          <col className="w-[142px]" />
          <col className="w-[142px]" />
          <col className="w-[142px]" />
          <col className="w-[142px]" />
          <col className="w-[142px]" />
          <col className="w-[170px]" />
          <col className="w-[142px]" />
          <col className="w-[188px]" />
          <col className="w-[142px]" />
          <col />
        </colgroup>
        <thead>
          <tr>
            <th colSpan={2} className="h-[29px] border-r border-[#a9abae] bg-[#dfe2e7] p-0">
              <button aria-label="Zaznacz wszystko" className="ml-[13px] mt-2 flex">
                <svg width="12" height="12" viewBox="0 0 12 12" aria-hidden="true">
                  <path d="M11 .500V11H.5z" fill="#eef1f5" stroke="#c5d0df" />
                </svg>
              </button>
            </th>
            {columns.map((c, i) => <HeadCell key={c} label={c} selected={i === SELECTED} />)}
            <HeadCell label="Kliknij, aby dodać" italic />
            <th className="border-r border-[#e8e8ee] bg-[#f7f8ff] p-0" />
            <th className="bg-[#f7f8ff] p-0" />
          </tr>
        </thead>
        <tbody>
          {records.map((r, ri) => {
            const blank = r[0] === "0";
            const odd = ri % 2 === 1;
            const cell = clsx("h-[29px] border-b border-r border-[#e1e1e1] p-0", odd && "bg-[#f1f1f1]");
            return (
              <tr key={r[0]}>
                <td className="h-[29px] border-b border-r border-[#a9abae] bg-[#ffd961] p-0">
                  {blank && (
                    <svg width="15" height="15" viewBox="0 0 15 15" className="mx-auto" aria-hidden="true">
                      <path d="M7.500 0v15M0 7.500h15M2.500 2.500l10 10m0-10-10 10" stroke="#5c5c4c" strokeWidth="1.500" />
                      <circle cx="7.500" cy="7.500" r="2.500" fill="#5c5c4c" />
                    </svg>
                  )}
                </td>
                <td className={cell}>
                  {!blank && (
                    <button aria-label="Rozwiń" className="mb-[5px] ml-[5px] flex">
                      <svg width="13" height="13" viewBox="0 0 13 13" aria-hidden="true">
                        <path d="M.5.500h12v12H.5z" fill="#fff" stroke="#999" />
                        <path d="M3 6.500h7M6.500 3v7" stroke="#000" />
                      </svg>
                    </button>
                  )}
                </td>
                {r.map((v, ci) => (
                  <td
                    key={ci}
                    className={clsx(
                      "h-[29px] whitespace-nowrap border-b border-r border-[#e1e1e1] py-0",
                      ci === 0 ? "pr-px text-right" : "pl-[3px] pr-0",
                      ci === SELECTED ? (odd ? "bg-[#9bc5e8]" : "bg-[#a4cff1]") : odd && "bg-[#f1f1f1]",
                      ci === SELECTED && ri === 0 && "font-semibold",
                    )}
                  >
                    {v}
                  </td>
                ))}
                <td className={cell} />
                <td className="border-b border-r border-[#f5f5f5] p-0" />
                <td className="border-b border-[#f5f5f5] p-0" />
              </tr>
            );
          })}
          {[0, 1].map((k) => (
            <tr key={k} aria-hidden="true">
              <td className="h-[29px] border-b border-r border-[#ececf2] bg-[#f7f8ff] p-0" />
              {Array.from({ length: 11 }, (_, i) => (
                <td key={i} className={clsx("h-[29px] border-b border-[#f5f5f5] p-0", i < 10 && "border-r")} />
              ))}
            </tr>
          ))}
        </tbody>
      </table>
      <div className="pointer-events-none absolute left-[616px] top-0 h-[349px] w-[145px] border-[3px] border-[#f9a6a9]" />
    </div>
  );
}

function DocTab({ label, size, active }: { label: string; size: string; active?: boolean }) {
  return (
    <button className={clsx("relative flex h-9 items-center text-[16px]", size, active && "z-10 font-bold")}>
      <svg width="130" height="36" viewBox="0 0 130 36" className="absolute left-0 top-0" aria-hidden="true">
        {active ? (
          <path d="M.5 36V7.500q0-6 6-6H98c9 0 12 6 16 17 4 12 7 17 16 17V36" fill="#fff" stroke="#a0a0a0" />
        ) : (
          <path d="M.5 24V7.500q0-6 6-6H93c9 0 12 6 16 17 4 12 8 16 14 16H12Q4 34 .5 24" fill="#fff" stroke="#a0a0a0" />
        )}
      </svg>
      <span className="relative ml-2 flex items-center gap-3 pb-px"><SheetIcon /><span>{label}</span></span>
    </button>
  );
}

export default function App() {
  return (
    <div className={clsx("flex h-screen flex-col overflow-hidden border-l-2 border-[#a4373a] bg-[#e6e6e6]", uiFont)}>
      <header className="relative shrink-0 bg-[#a4373a]">
        <Backdrop />
        <div className="relative">
          <TitleBar />
          <TabStrip />
        </div>
      </header>
      <Ribbon />
      <div className="flex min-h-0 flex-1">
        <NavPane />
        <div className="w-[7px] shrink-0 bg-[#c6c6c6]" />
        <main className="flex min-w-0 flex-1 flex-col border-l border-[#808080]">
          <div className="flex h-9 shrink-0 border-b-2 border-[#c6c6c6] pl-px text-[#262626]">
            <DocTab label="Platnicy" size="w-[118px]" active />
            <DocTab label="Wplaty" size="w-[118px]" />
          </div>
          <Datasheet />
        </main>
      </div>
    </div>
  );
}
